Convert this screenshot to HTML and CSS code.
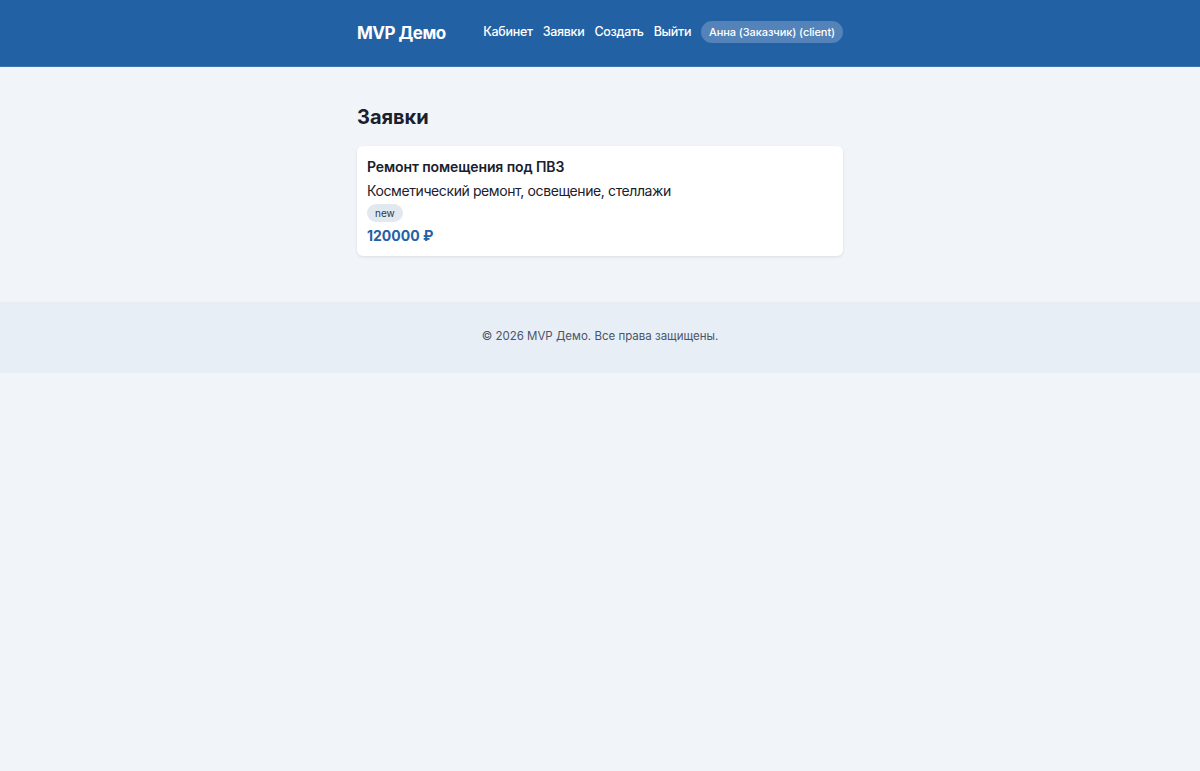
FILE: index.html
```html
<!DOCTYPE html>
<html lang="ru">
<head>
    <meta charset="UTF-8">
    <meta name="viewport" content="width=device-width, initial-scale=1.0">
    <title>MVP Демо — Заявки</title>
    <link rel="stylesheet" href="styles.css">
</head>
<body>
    <header class="header">
        <div class="container header-inner">
            <a href="#" class="logo">MVP Демо</a>
            <nav class="nav">
                <a href="#" class="nav-link">Кабинет</a>
                <a href="#" class="nav-link">Заявки</a>
                <a href="#" class="nav-link">Создать</a>
                <a href="#" class="nav-link">Выйти</a>
                <span class="user-badge">Анна (Заказчик) (client)</span>
            </nav>
        </div>
    </header>

    <main class="container main">
        <h1 class="page-title">Заявки</h1>

        <!-- Order list -->
        <div class="order-card">
            <h3 class="order-title">Ремонт помещения под ПВЗ</h3>
            <p class="order-desc">Косметический ремонт, освещение, стеллажи</p>
            <span class="status">new</span>
            <div class="order-price">120000 ₽</div>
        </div>
    </main>

    <footer class="footer">
        <p>© 2026 MVP Демо. Все права защищены.</p>
    </footer>
</body>
</html>
```

FILE: styles.css
```css
html, body {
    margin: 0;
}

body {
    font-family: Inter, "Noto Sans", sans-serif;
    background-color: #f1f5f9;
    color: #1a202c;
}

.container {
    width: 486px;
    margin: 0 auto;
}

/* Header */
.header {
    background-color: #2361a5;
    height: 67px;
    border-bottom: 1px solid #3a72ad;
    box-sizing: border-box;
}

.header-inner {
    height: 100%;
    display: flex;
    align-items: center;
    justify-content: space-between;
}

.logo {
    color: #fff;
    font-size: 17px;
    font-weight: 700;
    text-decoration: none;
    letter-spacing: -0.5px;
}

.nav {
    display: flex;
    align-items: center;
    gap: 10px;
    margin-bottom: 3px;
}

.nav-link {
    color: #fff;
    font-size: 12.5px;
    font-weight: 500;
    text-decoration: none;
    letter-spacing: -0.3px;
}

.user-badge {
    color: #fff;
    font-size: 11px;
    font-weight: 500;
    background-color: rgba(255, 255, 255, 0.22);
    padding: 4px 8px;
    border-radius: 12px;
    letter-spacing: -0.1px;
}

/* Main */
.main {
    padding: 38px 0 46px;
}

.page-title {
    font-size: 20px;
    font-weight: 700;
    margin: 0 0 17px;
    line-height: 24px;
}

.order-card {
    background: #fff;
    border-radius: 6px;
    padding: 12px 10px 11px;
    box-shadow: 0 1px 3px rgba(15, 23, 42, 0.1);
}

.order-title {
    font-size: 14px;
    font-weight: 600;
    margin: 0 0 5px;
    line-height: 18px;
    letter-spacing: -0.1px;
}

.order-desc {
    font-size: 14px;
    margin: 0;
    line-height: 20px;
    letter-spacing: -0.4px;
}

.status {
    display: inline-block;
    font-size: 10px;
    background-color: #e2e8f0;
    color: #2d3748;
    padding: 2px 8px;
    border-radius: 9px;
    line-height: 14px;
}

.order-price {
    font-size: 14px;
    font-weight: 700;
    color: #2361a5;
    margin-top: 5px;
    line-height: 18px;
}

/* Footer */
.footer {
    background-color: #e8eef6;
    text-align: center;
    padding: 24px 0 27px;
}

.footer p {
    margin: 0;
    font-size: 11.5px;
    color: #4a5568;
    line-height: 20px;
}
```
